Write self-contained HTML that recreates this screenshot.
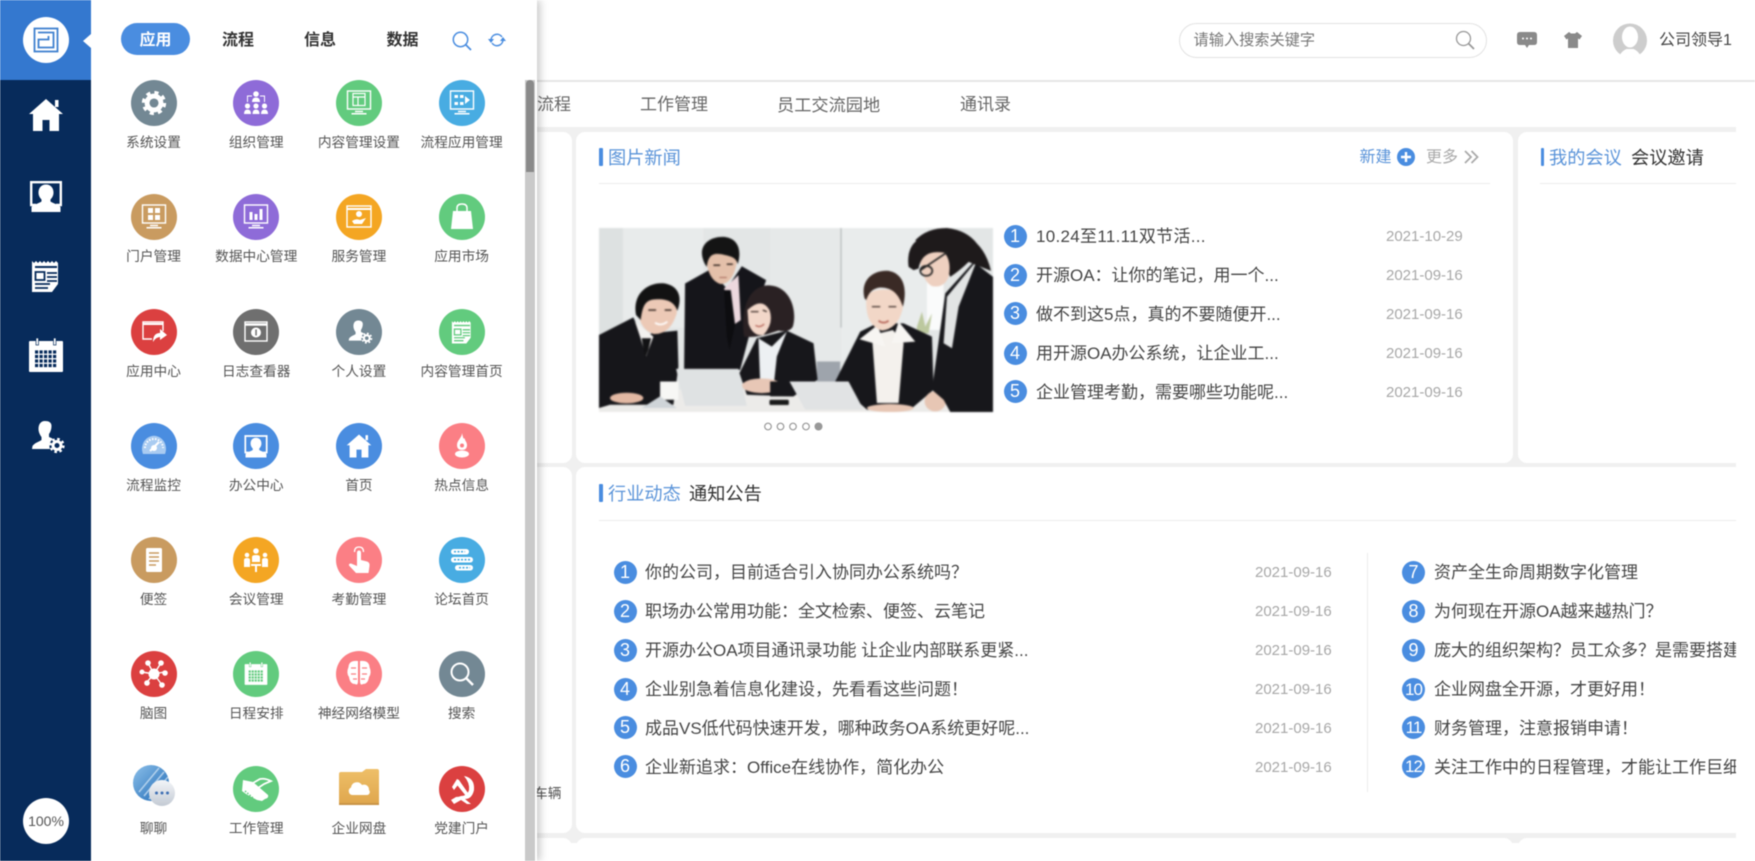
<!DOCTYPE html>
<html lang="zh"><head><meta charset="utf-8"><title>OA</title>
<style>
*{box-sizing:border-box}
html,body{margin:0;padding:0;width:1755px;height:861px;overflow:hidden;background:#fff}
body{font-family:"Liberation Sans","Noto Sans CJK SC",sans-serif;color:#444;position:relative}
#root{position:absolute;left:0;top:0;width:1755px;height:861px;overflow:hidden;filter:blur(.4px)}
.a{position:absolute}
.t{position:absolute;white-space:nowrap;line-height:24px;height:24px;margin-top:1px}
.card{position:absolute;background:#fff;border-radius:9px;overflow:hidden}
.blue{color:#5b94d9}
.n{position:absolute;width:23px;height:23px;border-radius:50%;background:#4a8de0;color:#fff;font-size:18px;line-height:23px;text-align:center}
.n.s{letter-spacing:-1px;font-size:17px}
.x{position:absolute;white-space:nowrap;font-size:17px;line-height:24px;height:24px;color:#454545;margin-top:1px}
.d{position:absolute;white-space:nowrap;font-size:15px;line-height:24px;height:24px;color:#a8a8a8;margin-top:1px}
.bar{position:absolute;width:3.5px;background:#4a8de0;border-radius:1px}
.grid{position:absolute;left:102.2px;top:80px;display:grid;grid-template-columns:repeat(4,102.7px);grid-auto-rows:114.3px}
.it{position:relative;text-align:center;font-size:13.7px;color:#555}
.c{width:46px;height:46px;border-radius:50%;margin:0 auto;display:block}
.it b{position:absolute;left:-6px;right:-6px;top:53px;line-height:20px;font-weight:400;white-space:nowrap}
.tab{position:absolute;top:29px;font-size:16px;line-height:24px;font-weight:700;color:#333;width:60px;text-align:center}
svg{display:block;overflow:visible}
</style></head><body>
<svg width="0" height="0" style="position:absolute"><defs>
<symbol id="gear" viewBox="0 0 36 36"><circle cx="18" cy="18" r="10" fill="none" stroke="#fff" stroke-width="7"/><circle cx="18" cy="18" r="15" fill="none" stroke="#fff" stroke-width="5" stroke-dasharray="5.9 5.9"/></symbol>
<symbol id="home" viewBox="0 0 36 36"><path d="M18 2 35 17H31V34H21.5V23H14.5V34H5V17H1Z" fill="#fff"/><rect x="27" y="3" width="3.5" height="7" fill="#fff"/></symbol>
<symbol id="desk" viewBox="0 0 36 36"><path d="M8 27H3.200V4.200H32.800V27H28" fill="none" stroke="#fff" stroke-width="2.400"/><path d="M18 6.500c-4.800 0-7.500 3.500-7.500 8 0 3 1.200 5 3 7v2c-3 2-8 3-10 5.500v5h29v-5c-2-2.500-7-3.500-10-5.500v-2c1.800-2 3-4 3-7 0-4.500-2.700-8-7.500-8z" fill="#fff"/></symbol>
<symbol id="news" viewBox="0 0 36 36"><path d="M4 3l2 2 2-2 2 2 2-2 2 2 2-2 2 2 2-2 2 2 2-2 2 2 2-2 2 2 V26L24 34H4Z" fill="#fff"/><path d="M7 9H29" stroke="currentColor" stroke-width="2"/><rect x="7.500" y="14" width="9" height="8" fill="none" stroke="currentColor" stroke-width="1.800"/><path d="M19 15H29M19 19H29M19 23H29M7 26H22M7 30H20" stroke="currentColor" stroke-width="1.800"/></symbol>
<symbol id="cal" viewBox="0 0 36 36"><rect x="1" y="4" width="34" height="31" rx="1" fill="#fff"/><rect x="8" y="1" width="2.500" height="7" fill="#fff" stroke="currentColor" stroke-width=".7"/><rect x="25.500" y="1" width="2.500" height="7" fill="#fff" stroke="currentColor" stroke-width=".7"/><path d="M7 15H29M7 19.500H29M7 24H29M7 28.500H29" stroke="currentColor" stroke-width="3.300" stroke-dasharray="3.200 1.300"/></symbol>
<symbol id="ug" viewBox="0 0 36 36"><path d="M14 2c-4.500 0-6.500 3.500-6.500 8 0 3 1.500 6 3 8v3c-3 2-7 3-9 6l-.5 3H19c-1.500-4 0-8 3-10-1-1-3-1.500-4-2v-3c1.500-2 2.500-5 2.500-8 0-3.500-2.500-5-6.500-5z" fill="#fff"/><circle cx="26" cy="26.500" r="4" fill="none" stroke="#fff" stroke-width="3"/><circle cx="26" cy="26.500" r="6.500" fill="none" stroke="#fff" stroke-width="2.300" stroke-dasharray="2.550 2.550"/></symbol>
<symbol id="mon" viewBox="0 0 46 46"><rect x="11.500" y="11" width="23" height="18" fill="none" stroke="#fff" stroke-width="1.400"/><path d="M19 31.500H27M15.500 33.800H30.500" stroke="#fff" stroke-width="1.500"/></symbol>
<symbol id="win" viewBox="0 0 46 46"><rect x="12" y="13" width="22" height="19" fill="none" stroke="#fff" stroke-width="1.400"/><path d="M12 15.500H34" stroke="#fff" stroke-width="2.500"/></symbol>
<linearGradient id="gl" x1="0" y1="0" x2="1" y2="1"><stop offset="0" stop-color="#8cc0ea"/><stop offset="1" stop-color="#1e68b4"/></linearGradient>
<linearGradient id="gf" x1="0" y1="0" x2="0" y2="1"><stop offset="0" stop-color="#eebf68"/><stop offset="1" stop-color="#dfa64d"/></linearGradient>
<linearGradient id="gb" x1="0" y1="0" x2="0" y2="1"><stop offset="0" stop-color="#f3f5f8"/><stop offset="1" stop-color="#c3cad4"/></linearGradient>
</defs></svg>
<div id="root">

<!-- header -->
<div class="a" style="left:0;top:80px;width:1755px;height:2px;background:#e6e6e6"></div>
<div class="a" style="left:1179px;top:23px;width:308px;height:35px;border:1px solid #e2e2e2;border-radius:18px;background:#fff"></div>
<div class="t" style="left:1193.500px;top:28px;font-size:15.200px;color:#777">请输入搜索关键字</div>
<svg class="a" style="left:1455px;top:30px" width="20" height="20" viewBox="0 0 20 20"><circle cx="8.500" cy="8.500" r="7" fill="none" stroke="#999" stroke-width="1.300"/><path d="M13.500 13.500 19 19" stroke="#999" stroke-width="1.800"/></svg>
<svg class="a" style="left:1517px;top:31px" width="20" height="18" viewBox="0 0 20 18"><path d="M3 1H17Q20 1 20 4V11Q20 14 17 14H12L10 17 8 14H3Q0 14 0 11V4Q0 1 3 1Z" fill="#8a8a8a"/><circle cx="6" cy="7.500" r="1" fill="#fff"/><circle cx="10" cy="7.500" r="1" fill="#fff"/><circle cx="14" cy="7.500" r="1" fill="#fff"/></svg>
<svg class="a" style="left:1564px;top:31px" width="18" height="18" viewBox="0 0 18 18"><path d="M5 1 7 2.500H11L13 1 18 5 15.500 8.500 14 7.500V17H4V7.500L2.500 8.500 0 5Z" fill="#8a8a8a"/></svg>
<svg class="a" style="left:1613px;top:23px" width="34" height="35" viewBox="0 0 34 35"><circle cx="17" cy="17.500" r="17" fill="#cdcdcd"/><ellipse cx="17" cy="14" rx="8" ry="10.500" fill="#fff"/><path d="M6 33Q10 27 13.500 26H20.500Q24 27 28 33L17 35Z" fill="#fff"/></svg>
<div class="t" style="left:1659px;top:28px;font-size:16px;color:#444">公司领导1</div>

<!-- nav -->
<div class="t" style="left:537px;top:92px;font-size:17px;color:#666">流程</div>
<div class="t" style="left:640px;top:92px;font-size:17px;color:#666">工作管理</div>
<div class="t" style="left:777px;top:92px;font-size:17.200px;color:#666">员工交流园地</div>
<div class="t" style="left:960px;top:92px;font-size:17px;color:#666">通讯录</div>

<!-- content -->
<div class="a" style="left:530px;top:127px;width:1206px;height:734px;background:#f0f0f0"></div>
<div class="card" style="left:500px;top:132px;width:72px;height:331px"></div>
<div class="card" style="left:500px;top:467px;width:72px;height:366px"></div>
<div class="card" style="left:500px;top:838px;width:72px;height:60px"></div>
<div class="t" style="left:534px;top:780.500px;font-size:13.700px;color:#555">车辆</div>

<div class="card" style="left:576px;top:132px;width:937px;height:331px"></div>
<div class="card" style="left:1518px;top:132px;width:218px;height:331px;border-radius:9px 0 0 9px"></div>
<div class="card" style="left:576px;top:467px;width:1160px;height:366px;border-radius:9px 0 0 9px"></div>
<div class="card" style="left:576px;top:838px;width:937px;height:60px"></div>
<div class="card" style="left:1518px;top:838px;width:218px;height:60px;border-radius:9px 0 0 0"></div>
<div class="a" style="left:530px;top:843px;width:1225px;height:18px;background:#fff"></div>

<!-- card 2 header -->
<div class="bar" style="left:599px;top:148px;height:18px"></div>
<div class="t blue" style="left:608px;top:145px;font-size:18.200px">图片新闻</div>
<div class="t blue" style="left:1359.500px;top:145px;font-size:16px">新建</div>
<svg class="a" style="left:1397px;top:148px" width="18" height="18" viewBox="0 0 18 18"><circle cx="9" cy="9" r="9" fill="#4a8de0"/><path d="M9 4V14M4 9H14" stroke="#fff" stroke-width="2.400"/></svg>
<div class="t" style="left:1426px;top:145px;font-size:16px;color:#aaa">更多</div>
<svg class="a" style="left:1464px;top:150px" width="15" height="14" viewBox="0 0 15 14"><path d="M1 1 7 7 1 13M7.500 1 13.500 7 7.500 13" fill="none" stroke="#aaa" stroke-width="1.800"/></svg>
<div class="a" style="left:599px;top:183px;width:891px;height:1px;background:#ececec"></div>

<!-- photo -->
<svg class="a" style="left:599px;top:228px;filter:blur(.7px)" width="394" height="184" viewBox="87 443 1181 554" preserveAspectRatio="none">
<defs><clipPath id="ph"><rect x="87" y="443" width="1181" height="554"/></clipPath></defs>
<g clip-path="url(#ph)">
<rect x="87" y="443" width="1181" height="554" fill="#e3e6e6"/>
<rect x="87" y="443" width="70" height="400" fill="#dde1e1"/><rect x="160" y="443" width="240" height="300" fill="#e8ebeb"/>
<rect x="600" y="443" width="210" height="400" fill="#e6e9e9"/>
<rect x="812" y="443" width="260" height="400" fill="#e9ecec"/><rect x="811" y="443" width="3" height="300" fill="#aeb2b3"/>
<rect x="1070" y="600" width="50" height="150" fill="#fafbfb"/>
<path d="M1040 740 1055 695 1065 740 1085 700 1075 760H1040Z" fill="#bcc89e"/>
<rect x="740" y="845" width="70" height="70" fill="#9ea4ac"/>
<!-- table -->
<rect x="87" y="930" width="1181" height="67" fill="#ecebe9"/>
<!-- man 2 -->
<path d="M345 610 420 568 470 625 515 558 588 600 560 680 510 870H342Z" fill="#15151a"/>
<path d="M462 625 505 585 512 720 490 735Z" fill="#ecd8de"/><path d="M462 630 482 630 495 735 478 810 470 770Z" fill="#0d0d10"/>
<path d="M408 530Q412 600 452 612 490 610 500 545 505 510 455 505 410 505 408 530Z" fill="#e4c0aa"/>
<path d="M398 535C385 490 425 466 465 470 505 476 515 510 503 552 498 530 480 528 455 522 430 518 415 522 410 560Q402 550 398 535Z" fill="#141414"/>
<path d="M430 555H450M470 552H488" stroke="#2a1d18" stroke-width="4"/><path d="M448 592H470" stroke="#a5675a" stroke-width="3"/>
<!-- man 1 -->
<path d="M87 765 190 712 218 775 245 760 322 752 325 860 310 975 120 975 87 985Z" fill="#16161a"/>
<path d="M195 725 250 770 228 830 210 770Z" fill="#f3f1ef"/><path d="M215 775 243 775 235 810 225 835Z" fill="#121214"/>
<path d="M205 670Q200 745 250 762 300 765 320 700 325 650 265 640 210 640 205 670Z" fill="#ecc9b6"/>
<path d="M198 705C186 640 235 604 285 610 325 618 338 650 322 692 312 662 285 655 255 658 228 660 218 672 212 720Z" fill="#121212"/>
<path d="M235 690H258M284 690H304" stroke="#2a1d18" stroke-width="4"/><path d="M255 728Q272 740 292 725" stroke="#fff" stroke-width="5" fill="none"/>
<ellipse cx="170" cy="955" rx="50" ry="16" fill="#e2b8a3"/>
<!-- woman center -->
<path d="M522 770C510 690 535 612 600 616 660 620 682 690 668 740 660 755 640 755 625 752 600 760 560 775 522 770Z" fill="#2a2123"/>
<path d="M532 690Q575 650 598 690 612 730 580 765 548 770 535 730Z" fill="#f2d7c9"/>
<path d="M542 695H565M578 690 590 695" stroke="#2a1d18" stroke-width="3.500"/><path d="M556 736Q570 745 582 732" stroke="#b8685c" stroke-width="4" fill="none"/>
<path d="M508 880 560 775 650 752 730 790 742 900 670 950 530 945Z" fill="#17171b"/>
<path d="M565 775 605 800 650 755 620 830 612 905 570 905Z" fill="#edf0f3"/>
<ellipse cx="575" cy="918" rx="60" ry="22" fill="#e8c7b6"/><path d="M600 905H670V950H600Z" fill="#17171b"/>
<!-- laptop 1 -->
<path d="M318 867H505L530 978H345Z" fill="#dfe2e3"/><path d="M270 905H325V960H270Z" fill="#f7f7f5"/>
<path d="M215 985 270 950 320 985Z" fill="#cfd4d8"/>
<rect x="598" y="960" width="58" height="16" rx="4" fill="#191919"/>
<!-- woman 4 -->
<path d="M795 905 870 755 920 730 1000 730 1085 770 1090 930 1020 990 890 990Z" fill="#17171b"/>
<path d="M905 765 968 750 1000 790 985 970 920 970Z" fill="#f4f1ed"/><path d="M868 778 922 735 945 800ZM1035 785 985 725 965 790Z" fill="#f7f5f2"/>
<path d="M888 660Q885 735 935 752 990 745 1000 670 1005 630 945 628 890 628 888 660Z" fill="#f2d7c7"/>
<path d="M883 655C868 595 915 568 955 572 1000 580 1012 625 998 680 985 640 965 622 930 622 905 625 895 640 888 660Z" fill="#3a2a25"/>
<path d="M905 680H930M955 680H978" stroke="#2a1d18" stroke-width="3.500"/><path d="M925 722Q940 734 955 722" stroke="#b8685c" stroke-width="5" fill="none"/>
<!-- laptop 2 -->
<path d="M658 905H835L880 990H705Z" fill="#e1e3e4"/>
<ellipse cx="960" cy="985" rx="70" ry="12" fill="#e7c6b4"/><ellipse cx="1095" cy="965" rx="32" ry="30" fill="#e7c6b4"/>
<!-- woman 5 -->
<path d="M1085 930 1125 640 1210 545 1268 590V997H1140L1120 960Z" fill="#17171b"/>
<path d="M1120 790 1130 650 1220 540 1165 680 1145 805Z" fill="#e2e4e4"/>
<path d="M1035 480Q1070 443 1130 443 1190 450 1220 490 1250 520 1262 572 1230 560 1195 545 1170 570 1140 590 1120 540 1060 500 1035 480Z" fill="#1e1a1b"/>
<path d="M1050 545Q1060 505 1120 515 1145 540 1135 590 1120 625 1085 618 1055 600 1050 545Z" fill="#eed0c0"/>
<path d="M1015 560C1008 510 1030 470 1075 470 1105 478 1125 495 1135 520 1090 510 1055 515 1045 565L1030 570Z" fill="#1e1a1b"/>
<path d="M1048 572 1132 515" stroke="#222" stroke-width="5"/><ellipse cx="1068" cy="572" rx="18" ry="15" fill="none" stroke="#222" stroke-width="5"/>
</g></svg>
<svg class="a" style="left:764px;top:422px" width="60" height="9" viewBox="0 0 60 9"><g fill="#fff" stroke="#999" stroke-width="1.200"><circle cx="4" cy="4.500" r="3.300"/><circle cx="16.500" cy="4.500" r="3.300"/><circle cx="29" cy="4.500" r="3.300"/><circle cx="42" cy="4.500" r="3.300"/></g><circle cx="54.500" cy="4.500" r="4" fill="#999"/></svg>

<!-- news list -->
<div class="n" style="left:1003.500px;top:224.500px">1</div><div class="x" style="left:1036px;top:224px;letter-spacing:.3px">10.24至11.11双节活...</div><div class="d" style="left:1386px;top:224px">2021-10-29</div>
<div class="n" style="left:1003.500px;top:263.500px">2</div><div class="x" style="left:1036px;top:263px">开源OA：让你的笔记，用一个...</div><div class="d" style="left:1386px;top:263px">2021-09-16</div>
<div class="n" style="left:1003.500px;top:302px">3</div><div class="x" style="left:1036px;top:302px">做不到这5点，真的不要随便开...</div><div class="d" style="left:1386px;top:301.500px">2021-09-16</div>
<div class="n" style="left:1003.500px;top:341.500px">4</div><div class="x" style="left:1036px;top:341px">用开源OA办公系统，让企业工...</div><div class="d" style="left:1386px;top:341px">2021-09-16</div>
<div class="n" style="left:1003.500px;top:380px">5</div><div class="x" style="left:1036px;top:380px">企业管理考勤，需要哪些功能呢...</div><div class="d" style="left:1386px;top:379.500px">2021-09-16</div>

<!-- card 3 header -->
<div class="bar" style="left:1540.500px;top:148px;height:18px"></div>
<div class="t blue" style="left:1549px;top:145px;font-size:18.200px">我的会议</div>
<div class="t" style="left:1631px;top:145px;font-size:18.200px;color:#333">会议邀请</div>
<div class="a" style="left:1540px;top:183px;width:196px;height:1px;background:#ececec"></div>

<!-- row 2 -->
<div class="bar" style="left:599px;top:484px;height:18px"></div>
<div class="t blue" style="left:608px;top:481px;font-size:18.200px">行业动态</div>
<div class="t" style="left:689px;top:481px;font-size:18.200px;color:#333">通知公告</div>
<div class="a" style="left:599px;top:520px;width:1137px;height:1px;background:#ececec"></div>
<div class="a" style="left:1367px;top:553px;width:1px;height:239px;background:#ececec"></div>

<div class="n" style="left:613.500px;top:560.500px">1</div><div class="x" style="left:645px;top:560px">你的公司，目前适合引入协同办公系统吗？</div><div class="d" style="left:1255px;top:560px">2021-09-16</div>
<div class="n" style="left:613.500px;top:599.500px">2</div><div class="x" style="left:645px;top:599px">职场办公常用功能：全文检索、便签、云笔记</div><div class="d" style="left:1255px;top:599px">2021-09-16</div>
<div class="n" style="left:613.500px;top:638.500px">3</div><div class="x" style="left:645px;top:638px">开源办公OA项目通讯录功能 让企业内部联系更紧...</div><div class="d" style="left:1255px;top:638px">2021-09-16</div>
<div class="n" style="left:613.500px;top:677.500px">4</div><div class="x" style="left:645px;top:677px">企业别急着信息化建设，先看看这些问题！</div><div class="d" style="left:1255px;top:677px">2021-09-16</div>
<div class="n" style="left:613.500px;top:716px">5</div><div class="x" style="left:645px;top:716px">成品VS低代码快速开发，哪种政务OA系统更好呢...</div><div class="d" style="left:1255px;top:716px">2021-09-16</div>
<div class="n" style="left:613.500px;top:755px">6</div><div class="x" style="left:645px;top:755px">企业新追求：Office在线协作，简化办公</div><div class="d" style="left:1255px;top:755px">2021-09-16</div>

<div class="a" style="left:1400px;top:540px;width:336px;height:260px;overflow:hidden">
<div class="n" style="left:2px;top:20.500px">7</div><div class="x" style="left:34px;top:20px">资产全生命周期数字化管理</div>
<div class="n" style="left:2px;top:59.500px">8</div><div class="x" style="left:34px;top:59px">为何现在开源OA越来越热门？</div>
<div class="n" style="left:2px;top:98.500px">9</div><div class="x" style="left:34px;top:98px">庞大的组织架构？员工众多？是需要搭建一个</div>
<div class="n s" style="left:2px;top:137.500px">10</div><div class="x" style="left:34px;top:137px">企业网盘全开源，才更好用！</div>
<div class="n s" style="left:2px;top:176px">11</div><div class="x" style="left:34px;top:176px">财务管理，注意报销申请！</div>
<div class="n s" style="left:2px;top:215px">12</div><div class="x" style="left:34px;top:215px">关注工作中的日程管理，才能让工作巨细无遗</div>
</div>

<!-- panel -->
<div class="a" style="left:91px;top:0;width:446px;height:861px;background:#fff;box-shadow:3px 0 8px rgba(0,0,0,.22)"></div>
<div class="a" style="left:525px;top:80px;width:10px;height:781px;background:#c9c9c9"></div>
<div class="a" style="left:526px;top:80px;width:8px;height:92px;background:#8a8a8a;border-radius:4px 4px 0 0"></div>

<div class="a" style="left:121px;top:23px;width:69px;height:32px;border-radius:16px;background:#4a8de0"></div>
<div class="tab" style="left:125.500px;color:#fff">应用</div>
<div class="tab" style="left:208px">流程</div>
<div class="tab" style="left:290px">信息</div>
<div class="tab" style="left:372.500px">数据</div>
<svg class="a" style="left:452px;top:31px" width="20" height="20" viewBox="0 0 20 20"><circle cx="8.500" cy="8.500" r="7.200" fill="none" stroke="#4a8de0" stroke-width="1.500"/><path d="M13.500 13.500 19 19" stroke="#4a8de0" stroke-width="1.800"/></svg>
<svg class="a" style="left:488px;top:32px" width="18" height="16" viewBox="0 0 18 16"><path d="M3 8A6 6 0 0 1 14 5M15 8A6 6 0 0 1 4 11" fill="none" stroke="#4a8de0" stroke-width="1.500"/><path d="M0 7H6L3 11ZM12 9H18L15 5Z" fill="#4a8de0"/></svg>

<div class="grid">
<div class="it"><svg class="c" style="background:#738894" viewBox="0 0 46 46"><use href="#gear" x="10.500" y="10.500" width="25" height="25"/></svg><b>系统设置</b></div>
<div class="it"><svg class="c" style="background:#8e6bd8" viewBox="0 0 46 46"><g fill="#fff"><circle cx="23" cy="14" r="2.800"/><path d="M19 22Q19 17.500 23 17.500T27 22Z"/><circle cx="14.500" cy="26" r="2.600"/><path d="M11 34Q11 29.500 14.500 29.500T18 34Z"/><circle cx="23" cy="26" r="2.600"/><path d="M19.500 34Q19.500 29.500 23 29.500T26.500 34Z"/><circle cx="31.500" cy="26" r="2.600"/><path d="M28 34Q28 29.500 31.500 29.500T35 34Z"/></g><path d="M19 16H14.500V22M27 16H31.500V22" fill="none" stroke="#fff"/></svg><b>组织管理</b></div>
<div class="it"><svg class="c" style="background:#62cb7e" viewBox="0 0 46 46"><use href="#mon" width="46" height="46"/><rect x="17" y="13.500" width="12" height="12" fill="none" stroke="#fff" stroke-width="1.200"/><path d="M17 17H29M22 17V25.500" stroke="#fff" stroke-width="1.200"/></svg><b>内容管理设置</b></div>
<div class="it"><svg class="c" style="background:#48ace2" viewBox="0 0 46 46"><use href="#mon" width="46" height="46"/><g fill="#fff"><rect x="15.500" y="15" width="3.500" height="3"/><rect x="21" y="15" width="3.500" height="3"/><rect x="15.500" y="22" width="3.500" height="3"/><rect x="21" y="22" width="3.500" height="3"/><path d="M26 16 31 20 26 24Z"/></g></svg><b>流程应用管理</b></div>

<div class="it"><svg class="c" style="background:#c99b60" viewBox="0 0 46 46"><use href="#mon" width="46" height="46"/><g fill="#fff"><rect x="17" y="14" width="5" height="5"/><rect x="24" y="14" width="5" height="5"/><rect x="17" y="21" width="5" height="5"/><rect x="24" y="21" width="5" height="5"/></g></svg><b>门户管理</b></div>
<div class="it"><svg class="c" style="background:#8e6bd8" viewBox="0 0 46 46"><use href="#mon" width="46" height="46"/><g fill="#fff"><rect x="16.500" y="18" width="3" height="8"/><rect x="21.500" y="20" width="3" height="6"/><rect x="26.500" y="15" width="3" height="11"/></g></svg><b>数据中心管理</b></div>
<div class="it"><svg class="c" style="background:#f4a623" viewBox="0 0 46 46"><rect x="11" y="12" width="24" height="21" fill="none" stroke="#fff" stroke-width="1.400"/><path d="M11 15H35" stroke="#fff" stroke-width="2"/><circle cx="23" cy="20" r="3" fill="#fff"/><path d="M16 27Q20 24 24 26L30 24 26 30H18Z" fill="#fff"/></svg><b>服务管理</b></div>
<div class="it"><svg class="c" style="background:#62cb7e" viewBox="0 0 46 46"><path d="M14 17H32L34 35H12Z" fill="#fff"/><path d="M18 20V14Q18 10 23 10T28 14V20" fill="none" stroke="#fff" stroke-width="1.500"/></svg><b>应用市场</b></div>

<div class="it"><svg class="c" style="background:#db4040" viewBox="0 0 46 46"><path d="M32 22V13H12V30H21" fill="none" stroke="#fff" stroke-width="1.400"/><path d="M12 15H32" stroke="#fff" stroke-width="2"/><path d="M22 33Q22 24 29 24V20L36 26 29 31V28Q25 28 22 33Z" fill="#fff"/></svg><b>应用中心</b></div>
<div class="it"><svg class="c" style="background:#6f6f6f" viewBox="0 0 46 46"><use href="#win" width="46" height="46"/><circle cx="23" cy="23.500" r="5" fill="#fff"/><rect x="22.300" y="20.500" width="1.500" height="6" fill="#6f6f6f"/></svg><b>日志查看器</b></div>
<div class="it"><svg class="c" style="background:#738894;color:#738894" viewBox="0 0 46 46"><use href="#ug" x="12" y="10" width="26" height="26"/></svg><b>个人设置</b></div>
<div class="it"><svg class="c" style="background:#62cb7e;color:#62cb7e" viewBox="0 0 46 46"><use href="#news" x="10" y="10" width="26" height="26"/></svg><b>内容管理首页</b></div>

<div class="it"><svg class="c" style="background:#4a8de0" viewBox="0 0 46 46"><path d="M12 31A12 13 0 1 1 34 31Z" fill="#a9cbf1"/><path d="M19 28 28 19" stroke="#fff" stroke-width="2"/><circle cx="23" cy="25" r="3" fill="#fff"/><path d="M14 25A9 9 0 0 1 32 25" fill="none" stroke="#fff" stroke-width="2" stroke-dasharray="1.500 1.500"/></svg><b>流程监控</b></div>
<div class="it"><svg class="c" style="background:#4a8de0;color:#4a8de0" viewBox="0 0 46 46"><use href="#desk" x="10" y="10" width="26" height="26"/></svg><b>办公中心</b></div>
<div class="it"><svg class="c" style="background:#4a8de0" viewBox="0 0 46 46"><use href="#home" x="10" y="10" width="26" height="26"/></svg><b>首页</b></div>
<div class="it"><svg class="c" style="background:#fb7f85" viewBox="0 0 46 46"><path d="M23 10C23 15 18 17 18 22 18 25.500 20 27 23 27S28 25.500 28 22C28 19 26 18 25.500 15 24.500 17 24 14 23 10Z" fill="#fff"/><circle cx="23" cy="22.500" r="2" fill="#fb7f85"/><ellipse cx="23" cy="31" rx="7" ry="3.500" fill="#fff"/></svg><b>热点信息</b></div>

<div class="it"><svg class="c" style="background:#c99b60" viewBox="0 0 46 46"><rect x="15" y="11" width="16" height="24" rx="1.500" fill="#fff"/><path d="M18 16H28M18 20H28M18 24H28M18 28H25" stroke="#c99b60" stroke-width="1.400"/></svg><b>便签</b></div>
<div class="it"><svg class="c" style="background:#f4a623" viewBox="0 0 46 46"><g fill="#fff"><circle cx="23" cy="14" r="2.800"/><path d="M19 25V20Q19 18 23 18T27 20V25Z"/><circle cx="14" cy="18" r="2.300"/><path d="M11 30V23Q11 21 14 21T17 23V30Z"/><circle cx="32" cy="18" r="2.300"/><path d="M29 30V23Q29 21 32 21T35 23V30Z"/><rect x="18" y="27" width="10" height="2"/><rect x="22" y="29" width="2" height="6"/></g></svg><b>会议管理</b></div>
<div class="it"><svg class="c" style="background:#fb7f85" viewBox="0 0 46 46"><path d="M18.500 15Q18.500 10 23 10T27.500 15" fill="none" stroke="#fff" stroke-width="1.300"/><path d="M21 16Q21 13.500 23 13.500T25 16V23L31 24.500Q34 25.500 33.500 29L32.500 36H20L13 28.500Q12.500 26.500 15 26.500L21 29Z" fill="#fff"/></svg><b>考勤管理</b></div>
<div class="it"><svg class="c" style="background:#48ace2" viewBox="0 0 46 46"><g fill="#fff"><rect x="12" y="12" width="18" height="5.500" rx="2.700"/><rect x="12" y="20" width="22" height="5.500" rx="2.700"/><rect x="16" y="28" width="18" height="5.500" rx="2.700"/></g><path d="M15 14.700H26M15 22.700H31M20 30.700H31" stroke="#48ace2" stroke-width="1.600" stroke-dasharray="2 1.500"/></svg><b>论坛首页</b></div>

<div class="it"><svg class="c" style="background:#db4040" viewBox="0 0 46 46"><path d="M23 23 17 12M23 23 30 12M23 23 33 21M23 23 31 34M23 23 16 31M23 23 11 21" stroke="#fff" stroke-width="1.400"/><g fill="#fff"><circle cx="23" cy="23" r="5.500"/><circle cx="17" cy="12" r="2.800"/><circle cx="30" cy="12" r="2.800"/><circle cx="34" cy="22" r="2.800"/><circle cx="31" cy="34" r="2.800"/><circle cx="16" cy="32" r="2.800"/><circle cx="11" cy="21" r="2.500"/></g></svg><b>脑图</b></div>
<div class="it"><svg class="c" style="background:#62cb7e;color:#62cb7e" viewBox="0 0 46 46"><use href="#cal" x="11" y="10" width="24" height="25"/></svg><b>日程安排</b></div>
<div class="it"><svg class="c" style="background:#fb7f85" viewBox="0 0 46 46"><path d="M22 10Q13 9 12.500 16 10 22 13 26 14 33 19 33 22 35 22 30ZM24 10Q33 9 33.500 16 36 22 33 26 32 33 27 33 24 35 24 30Z" fill="#fff"/><path d="M15 17H20M15 23H20M17 28H21M26 17H31M26 23H31M25 28H29" stroke="#fb7f85" stroke-width="1.200"/></svg><b>神经网络模型</b></div>
<div class="it"><svg class="c" style="background:#738894" viewBox="0 0 46 46"><circle cx="21" cy="21" r="8.500" fill="none" stroke="#fff" stroke-width="2"/><path d="M27 27 34 34" stroke="#fff" stroke-width="2.500"/></svg><b>搜索</b></div>

<div class="it"><svg class="c" viewBox="0 0 46 46"><circle cx="20" cy="17" r="18" fill="url(#gl)"/><path d="M8 26 28 2M13 30 33 6M18 33 37 11" stroke="#d4e6f6" stroke-width="1.600" opacity=".7"/><circle cx="31" cy="27" r="13" fill="url(#gb)"/><circle cx="25.500" cy="27" r="1.500" fill="#3e6fb4"/><circle cx="31" cy="27" r="1.500" fill="#3e6fb4"/><circle cx="36.500" cy="27" r="1.500" fill="#3e6fb4"/></svg><b>聊聊</b></div>
<div class="it"><svg class="c" style="background:#62cb7e" viewBox="0 0 46 46"><path d="M10 14 20 16 35 29Q36 32 32 33L29 35 24 34 13 28 9 25Z" fill="#fff"/><path d="M20 17 27 13Q32 12 38 15L31 18 25 22" fill="none" stroke="#fff" stroke-width="1.800"/><path d="M12 25 20 32" stroke="#62cb7e" stroke-dasharray="1.500 1.500" stroke-width="1.500"/></svg><b>工作管理</b></div>
<div class="it"><svg class="c" viewBox="0 0 46 46"><path d="M3 8Q3 6 5 6H26L30 3H41Q43 3 43 5V37Q43 39 41 39H5Q3 39 3 37Z" fill="url(#gf)"/><path d="M3 37H43V39H3Z" fill="#c99346"/><path d="M16 29A4 4 0 0 1 15 21.500 6 6 0 0 1 26 19 5 5 0 0 1 33 24 3 3 0 0 1 31 29Z" fill="#fff"/></svg><b>企业网盘</b></div>
<div class="it"><svg class="c" style="background:#db4040" viewBox="0 0 46 46"><path d="M25 10Q36 12 35 24 33 33 26 33L32 38 28 38 22 34 15 38 12 34 17 31Q20 31 22 30 28 30 30 24 31 17 25 10Z" fill="#fff"/><path d="M13 21 18 13 20 14 22 17 29 27 27 30 18.500 19.500 15 24Z" fill="#fff"/></svg><b>党建门户</b></div>
</div>

<!-- sidebar -->
<div class="a" style="left:0;top:0;width:91px;height:861px;background:#072b5b;color:#072b5b"></div>
<div class="a" style="left:0;top:0;width:91px;height:80px;background:#3478cf"></div>
<div class="a" style="left:23px;top:17px;width:46px;height:46px;border-radius:50%;background:#fff"></div>
<svg class="a" style="left:33px;top:27px" width="26" height="26" viewBox="0 0 26 26"><rect x="1.500" y="1.500" width="23" height="23" fill="none" stroke="#3f80cf" stroke-width="1.800"/><path d="M5 5.500H20.500V20.500H5.500V12.500H15.500V9" fill="none" stroke="#3f80cf" stroke-width="1.800"/></svg>
<div class="a" style="left:83px;top:34px;width:0;height:0;border-top:7px solid transparent;border-bottom:7px solid transparent;border-right:8px solid #fff"></div>
<svg class="a" style="left:28px;top:97px;color:#072b5b" width="36" height="36"><use href="#home" width="36" height="36"/></svg>
<svg class="a" style="left:28px;top:178px;color:#072b5b" width="36" height="36"><use href="#desk" width="36" height="36"/></svg>
<svg class="a" style="left:28px;top:258px;color:#072b5b" width="36" height="36"><use href="#news" width="36" height="36"/></svg>
<svg class="a" style="left:28px;top:337px;color:#072b5b" width="36" height="36"><use href="#cal" width="36" height="36"/></svg>
<svg class="a" style="left:31px;top:419px;color:#072b5b" width="36" height="36"><use href="#ug" width="36" height="36"/></svg>
<div class="a" style="left:23px;top:798px;width:46px;height:46px;border-radius:50%;background:#fff;text-align:center;line-height:46px;font-size:14px;color:#555">100%</div>
</div>
</body></html>
